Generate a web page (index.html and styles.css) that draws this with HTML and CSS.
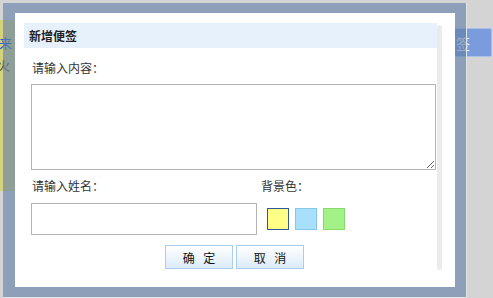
FILE: index.html
```html
<!DOCTYPE html>
<html lang="zh">
<head>
<meta charset="utf-8">
<title>新增便签</title>
<link rel="stylesheet" href="styles.css">
</head>
<body>
<div class="wall">
  <div class="note">
    <p class="note-link">来</p>
    <p class="note-text">过火</p>
  </div>
  <button class="add-btn">便签</button>
</div>

<div class="dialog">
  <div class="panel">
    <div class="inner">
      <div class="content">
        <div class="title">新增便签</div>
        <form class="form">
          <label class="label first">请输入内容：</label>
          <textarea class="area"></textarea>
          <div class="grid">
            <label class="label">请输入姓名：</label>
            <label class="label">背景色：</label>
            <input class="name" type="text">
            <div class="swatches">
              <span class="swatch yellow selected"></span>
              <span class="swatch blue"></span>
              <span class="swatch green"></span>
            </div>
          </div>
          <div class="actions">
            <button type="button" class="btn">确 定</button>
            <button type="button" class="btn">取 消</button>
          </div>
        </form>
      </div>
      <div class="scroll"></div>
    </div>
  </div>
</div>
</body>
</html>
```

FILE: styles.css
```css
html, body {
  margin: 0;
  padding: 0;
}
body {
  width: 493px;
  height: 298px;
  overflow: hidden;
  background: #d4d4d4;
  font-family: "Noto Sans CJK SC", "Noto Sans", sans-serif;
  font-size: 12px;
  color: #333;
  position: relative;
}
.wall {
  position: relative;
  width: 493px;
  height: 298px;
}
.note {
  position: absolute;
  left: -60px;
  top: 20px;
  width: 80px;
  height: 171px;
  background: #d4d27c;
  border-right: 2px solid #c4c26a;
  box-sizing: border-box;
  padding: 12px 4px 0 0;
  text-align: right;
}
.note p {
  margin: 0;
  line-height: 22px;
  font-size: 13px;
}
.note-link { color: #2a5fc4; padding-right: 2px; }
.note-text { color: #444; padding-right: 4px; }
.add-btn {
  position: absolute;
  left: 420px;
  top: 28px;
  width: 72px;
  height: 29px;
  background: #7a9bdc;
  border: 1px solid #a9c0ea;
  border-radius: 2px;
  color: #f2f6ff;
  font-family: inherit;
  font-size: 14px;
  padding: 0;
}
.dialog {
  position: absolute;
  left: 3px;
  top: 3px;
  width: 463px;
  height: 294px;
  box-sizing: border-box;
  padding: 10px 11px 10px 12px;
  background: rgba(98, 128, 168, 0.62);
  box-shadow: 1px 0 0 #e2e6e2, 0 1px 0 #e2e6e2;
}
.panel {
  background: #fff;
  height: 100%;
  box-sizing: border-box;
  padding: 10px 0 0 9px;
}
.inner {
  display: flex;
  height: 247px;
  width: 418px;
}
.content {
  flex: 1;
}
.scroll {
  width: 5px;
  margin-top: 2px;
  background: #ebebeb;
  border-radius: 3px;
}
.title {
  height: 25px;
  line-height: 25px;
  background: #e6f1fb;
  padding-left: 5px;
  font-weight: bold;
  color: #222;
}
.form {
  margin: 0 0 0 7px;
  display: flex;
  flex-direction: column;
}
.label {
  display: block;
  line-height: 16px;
  padding-left: 1px;
  color: #333;
}
.label.first {
  margin-top: 12px;
}
.area {
  margin: 8px 0 0 0;
  width: 405px;
  height: 86px;
  box-sizing: border-box;
  border: 1px solid #b4b4b4;
  padding: 0;
  display: block;
  resize: both;
}
.grid {
  margin-top: 8px;
  display: grid;
  grid-template-columns: 229px auto;
  row-gap: 9px;
  align-items: center;
}
.name {
  width: 226px;
  height: 32px;
  box-sizing: border-box;
  border: 1px solid #b4b4b4;
  margin: 0;
  padding: 0;
}
.swatches {
  display: flex;
  gap: 6px;
  padding-left: 7px;
}
.swatch {
  width: 22px;
  height: 22px;
  box-sizing: border-box;
  border: 1px solid;
}
.yellow { background: #ffff88; border-color: #b8b860; }
.yellow.selected { border-color: #2e5a9c; }
.blue { background: #a8e0fb; border-color: #86c6e6; }
.green { background: #a2f288; border-color: #8ad86e; }
.actions {
  margin-top: 10px;
  display: flex;
  gap: 3px;
  padding-left: 134px;
}
.btn {
  width: 68px;
  height: 24px;
  margin: 0;
  padding: 0 0 0 3px;
  border: 1px solid #a8cdee;
  background: linear-gradient(#ffffff, #dcebf8);
  font-family: inherit;
  font-size: 12px;
  color: #111;
  letter-spacing: 3px;
}
```
